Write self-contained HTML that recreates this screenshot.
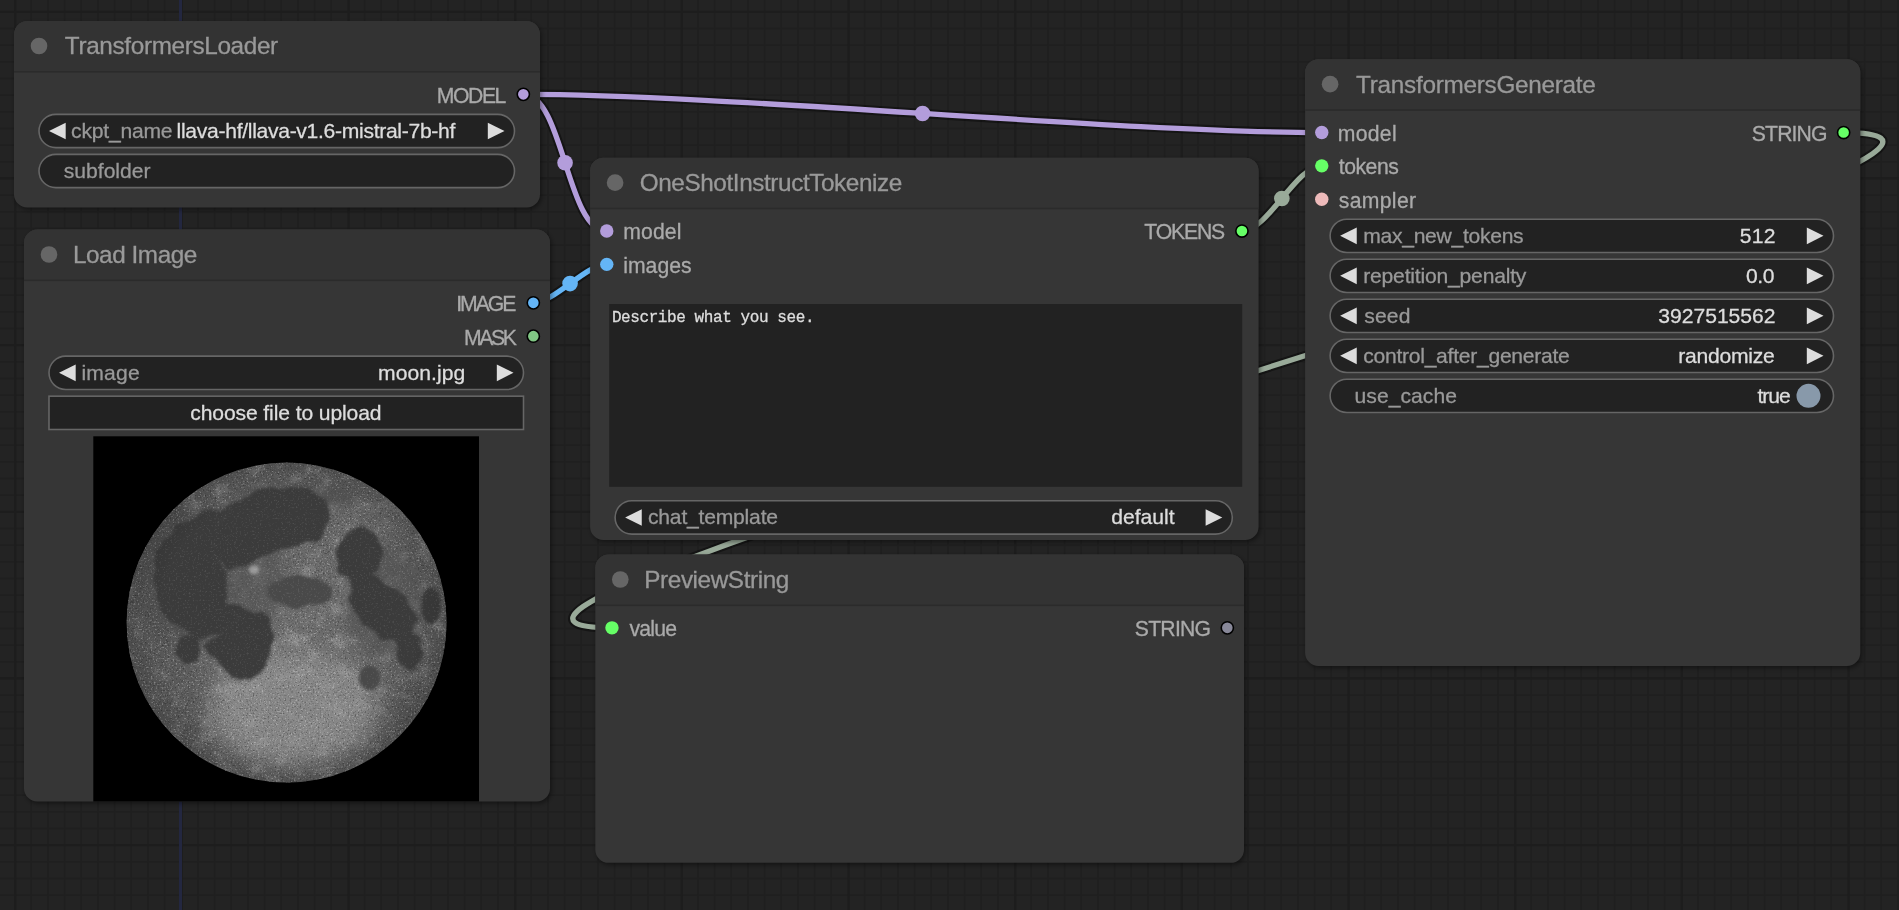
<!DOCTYPE html><html><head><meta charset="utf-8"><style>html,body{margin:0;padding:0;background:#222;overflow:hidden}svg{display:block;will-change:transform}text{font-family:"Liberation Sans", sans-serif}</style></head><body>
<svg width="1899" height="910" viewBox="0 0 1899 910">
<defs><filter id="sh" x="-10%" y="-10%" width="120%" height="120%"><feGaussianBlur stdDeviation="2.5"/></filter></defs>
<rect width="1899" height="910" fill="#232323"/>
<path d="M-2.07 0V910M31.27 0V910M47.93 0V910M64.60 0V910M81.27 0V910M97.93 0V910M114.60 0V910M131.27 0V910M147.93 0V910M164.60 0V910M197.93 0V910M214.60 0V910M231.27 0V910M247.93 0V910M264.60 0V910M281.27 0V910M297.93 0V910M314.60 0V910M331.27 0V910M364.60 0V910M381.27 0V910M397.93 0V910M414.60 0V910M431.27 0V910M447.93 0V910M464.60 0V910M481.27 0V910M497.93 0V910M531.27 0V910M547.93 0V910M564.60 0V910M581.27 0V910M597.93 0V910M614.60 0V910M631.27 0V910M647.93 0V910M664.60 0V910M697.93 0V910M714.60 0V910M731.27 0V910M747.93 0V910M764.60 0V910M781.27 0V910M797.93 0V910M814.60 0V910M831.27 0V910M864.60 0V910M881.27 0V910M897.93 0V910M914.60 0V910M931.27 0V910M947.93 0V910M964.60 0V910M981.27 0V910M997.93 0V910M1031.27 0V910M1047.93 0V910M1064.60 0V910M1081.27 0V910M1097.93 0V910M1114.60 0V910M1131.27 0V910M1147.93 0V910M1164.60 0V910M1197.93 0V910M1214.60 0V910M1231.27 0V910M1247.93 0V910M1264.60 0V910M1281.27 0V910M1297.93 0V910M1314.60 0V910M1331.27 0V910M1364.60 0V910M1381.27 0V910M1397.93 0V910M1414.60 0V910M1431.27 0V910M1447.93 0V910M1464.60 0V910M1481.27 0V910M1497.93 0V910M1531.27 0V910M1547.93 0V910M1564.60 0V910M1581.27 0V910M1597.93 0V910M1614.60 0V910M1631.27 0V910M1647.93 0V910M1664.60 0V910M1697.93 0V910M1714.60 0V910M1731.27 0V910M1747.93 0V910M1764.60 0V910M1781.27 0V910M1797.93 0V910M1814.60 0V910M1831.27 0V910M1864.60 0V910M1881.27 0V910M1897.93 0V910M1914.60 0V910M0 -4.87H1899M0 28.47H1899M0 45.13H1899M0 61.80H1899M0 78.47H1899M0 95.13H1899M0 111.80H1899M0 128.47H1899M0 145.13H1899M0 161.80H1899M0 195.13H1899M0 211.80H1899M0 228.47H1899M0 245.13H1899M0 261.80H1899M0 278.47H1899M0 295.13H1899M0 311.80H1899M0 328.47H1899M0 361.80H1899M0 378.47H1899M0 395.13H1899M0 411.80H1899M0 428.47H1899M0 445.13H1899M0 461.80H1899M0 478.47H1899M0 495.13H1899M0 528.47H1899M0 545.13H1899M0 561.80H1899M0 578.47H1899M0 595.13H1899M0 611.80H1899M0 628.47H1899M0 645.13H1899M0 661.80H1899M0 695.13H1899M0 711.80H1899M0 728.47H1899M0 745.13H1899M0 761.80H1899M0 778.47H1899M0 795.13H1899M0 811.80H1899M0 828.47H1899M0 861.80H1899M0 878.47H1899M0 895.13H1899M0 911.80H1899" stroke="#1f1f1f" stroke-width="1.4" fill="none"/>
<path d="M15.20 0V910M181.87 0V910M348.53 0V910M515.20 0V910M681.87 0V910M848.53 0V910M1015.20 0V910M1181.87 0V910M1348.53 0V910M1515.20 0V910M1681.87 0V910M1848.53 0V910M0 11.80H1899M0 178.47H1899M0 345.13H1899M0 511.80H1899M0 678.47H1899M0 845.13H1899" stroke="#1d1d1d" stroke-width="2.2" fill="none"/>
<rect x="179" y="0" width="3" height="910" fill="#232740"/>
<path d="M1843.63 132.53C2175.51 132.53 280.09 627.83 611.97 627.83" stroke="rgba(0,0,0,0.4)" stroke-width="9.5" fill="none"/>
<path d="M1843.63 132.53C2175.51 132.53 280.09 627.83 611.97 627.83" stroke="#9a9" stroke-width="5.3" fill="none"/>
<path d="M523.33 94.33C563.37 94.33 566.73 231.03 606.77 231.03" stroke="rgba(0,0,0,0.4)" stroke-width="9.5" fill="none"/>
<path d="M523.33 94.33C563.37 94.33 566.73 231.03 606.77 231.03" stroke="#b39ddb" stroke-width="5.3" fill="none"/>
<circle cx="565.05" cy="162.68" r="7.8" fill="#b39ddb"/>
<path d="M523.33 94.33C723.17 94.33 1121.93 132.53 1321.77 132.53" stroke="rgba(0,0,0,0.4)" stroke-width="9.5" fill="none"/>
<path d="M523.33 94.33C723.17 94.33 1121.93 132.53 1321.77 132.53" stroke="#b39ddb" stroke-width="5.3" fill="none"/>
<circle cx="922.55" cy="113.43" r="7.8" fill="#b39ddb"/>
<path d="M533.33 302.83C554.06 302.83 586.04 264.37 606.77 264.37" stroke="rgba(0,0,0,0.4)" stroke-width="9.5" fill="none"/>
<path d="M533.33 302.83C554.06 302.83 586.04 264.37 606.77 264.37" stroke="#64b5f6" stroke-width="5.3" fill="none"/>
<circle cx="570.05" cy="283.60" r="7.8" fill="#64b5f6"/>
<path d="M1241.93 231.03C1267.70 231.03 1296.00 165.87 1321.77 165.87" stroke="rgba(0,0,0,0.4)" stroke-width="9.5" fill="none"/>
<path d="M1241.93 231.03C1267.70 231.03 1296.00 165.87 1321.77 165.87" stroke="#9a9" stroke-width="5.3" fill="none"/>
<circle cx="1281.85" cy="198.45" r="7.8" fill="#9a9"/>
<rect x="15.50" y="23.00" width="526.00" height="186.50" rx="13.33" fill="rgba(0,0,0,0.45)" filter="url(#sh)"/>
<rect x="14.00" y="21.00" width="526.00" height="186.50" rx="13.33" fill="#363636"/>
<path d="M14.00 71.00V34.33A13.33 13.33 0 0 1 27.33 21.00H526.67A13.33 13.33 0 0 1 540.00 34.33V71.00Z" fill="#333"/>
<rect x="14.00" y="71.00" width="526.00" height="1.6" fill="#2b2b2b"/>
<circle cx="39.00" cy="46.00" r="8.33" fill="#666"/>
<text x="64.80" y="54.33" font-size="24.3" fill="#999" stroke="#999" stroke-width="0.3" style="font-family:'Liberation Sans', sans-serif;letter-spacing:-0.341px">TransformersLoader</text>
<circle cx="523.33" cy="94.33" r="6.1" fill="#b39ddb" stroke="#000" stroke-width="1.6"/>
<text x="436.80" y="102.67" font-size="21.2" fill="#aaa" stroke="#aaa" stroke-width="0.3" style="font-family:'Liberation Sans', sans-serif;letter-spacing:-1.45px">MODEL</text>
<rect x="39.00" y="114.33" width="475.50" height="33.33" rx="16.67" fill="#222" stroke="#666" stroke-width="1.6"/>
<path d="M65.67 122.67L49.00 131.00L65.67 139.33Z" fill="#ddd"/>
<path d="M487.83 122.67L504.50 131.00L487.83 139.33Z" fill="#ddd"/>
<text x="71.10" y="137.67" font-size="21.1" fill="#999" stroke="#999" stroke-width="0.3" style="font-family:'Liberation Sans', sans-serif;letter-spacing:-0.225px">ckpt_name</text>
<text x="176.60" y="137.67" font-size="21.1" fill="#ddd" stroke="#ddd" stroke-width="0.3" style="font-family:'Liberation Sans', sans-serif;letter-spacing:-0.3px">llava-hf/llava-v1.6-mistral-7b-hf</text>
<rect x="39.00" y="154.33" width="475.50" height="33.33" rx="16.67" fill="#222" stroke="#666" stroke-width="1.6"/>
<text x="63.85" y="177.67" font-size="21.1" fill="#999" stroke="#999" stroke-width="0.3" style="font-family:'Liberation Sans', sans-serif;letter-spacing:-0.019px">subfolder</text>
<rect x="25.50" y="231.50" width="526.00" height="572.00" rx="13.33" fill="rgba(0,0,0,0.45)" filter="url(#sh)"/>
<rect x="24.00" y="229.50" width="526.00" height="572.00" rx="13.33" fill="#363636"/>
<path d="M24.00 279.50V242.83A13.33 13.33 0 0 1 37.33 229.50H536.67A13.33 13.33 0 0 1 550.00 242.83V279.50Z" fill="#333"/>
<rect x="24.00" y="279.50" width="526.00" height="1.6" fill="#2b2b2b"/>
<circle cx="49.00" cy="254.50" r="8.33" fill="#666"/>
<text x="72.90" y="262.83" font-size="24.3" fill="#999" stroke="#999" stroke-width="0.3" style="font-family:'Liberation Sans', sans-serif;letter-spacing:-0.433px">Load Image</text>
<circle cx="533.33" cy="302.83" r="6.1" fill="#64b5f6" stroke="#000" stroke-width="1.6"/>
<text x="456.20" y="311.17" font-size="21.2" fill="#aaa" stroke="#aaa" stroke-width="0.3" style="font-family:'Liberation Sans', sans-serif;letter-spacing:-2.025px">IMAGE</text>
<circle cx="533.33" cy="336.17" r="6.1" fill="#81c784" stroke="#000" stroke-width="1.6"/>
<text x="464.00" y="344.50" font-size="21.2" fill="#aaa" stroke="#aaa" stroke-width="0.3" style="font-family:'Liberation Sans', sans-serif;letter-spacing:-2.4px">MASK</text>
<rect x="49.00" y="356.17" width="474.50" height="33.33" rx="16.67" fill="#222" stroke="#666" stroke-width="1.6"/>
<path d="M75.67 364.50L59.00 372.83L75.67 381.17Z" fill="#ddd"/>
<path d="M496.83 364.50L513.50 372.83L496.83 381.17Z" fill="#ddd"/>
<text x="81.40" y="379.50" font-size="21.1" fill="#999" stroke="#999" stroke-width="0.3" style="font-family:'Liberation Sans', sans-serif;letter-spacing:0.225px">image</text>
<text x="378.10" y="379.50" font-size="21.1" fill="#ddd" stroke="#ddd" stroke-width="0.3" style="font-family:'Liberation Sans', sans-serif;letter-spacing:0.057px">moon.jpg</text>
<rect x="49.00" y="396.17" width="474.50" height="33.33" fill="#222" stroke="#666" stroke-width="1.6"/>
<text x="190.20" y="419.50" font-size="21.1" fill="#ddd" stroke="#ddd" stroke-width="0.3" style="font-family:'Liberation Sans', sans-serif;letter-spacing:-0.105px">choose file to upload</text>
<rect x="93.3" y="436.3" width="385.7" height="365.2" fill="#000"/>
<defs><clipPath id="mc"><circle cx="286.60" cy="622.60" r="160.00"/></clipPath>
<radialGradient id="mg" cx="0.5" cy="0.5" r="0.5"><stop offset="0" stop-color="#6e6e6e"/><stop offset="0.7" stop-color="#666"/><stop offset="1" stop-color="#575757"/></radialGradient>
<filter id="mb" x="-30%" y="-30%" width="160%" height="160%"><feGaussianBlur stdDeviation="30"/></filter>
<filter id="mrough" x="-20%" y="-20%" width="140%" height="140%"><feTurbulence type="fractalNoise" baseFrequency="0.02" numOctaves="2" seed="5" result="t"/><feDisplacementMap in="SourceGraphic" in2="t" scale="30" xChannelSelector="R" yChannelSelector="G" result="d"/><feGaussianBlur in="d" stdDeviation="5"/></filter>
<filter id="mb2" x="-20%" y="-20%" width="140%" height="140%"><feGaussianBlur stdDeviation="5"/></filter>
<filter id="mb3" x="-30%" y="-30%" width="160%" height="160%"><feGaussianBlur stdDeviation="16"/></filter>
<filter id="noise" x="0" y="0" width="100%" height="100%"><feTurbulence type="fractalNoise" baseFrequency="0.55" numOctaves="2" seed="7"/><feColorMatrix values="0 0 0 0 1  0 0 0 0 1  0 0 0 0 1  0 0 0 4 -2.25"/></filter>
<filter id="noise2" x="0" y="0" width="100%" height="100%"><feTurbulence type="fractalNoise" baseFrequency="0.6" numOctaves="2" seed="11"/><feColorMatrix values="0 0 0 0 0  0 0 0 0 0  0 0 0 0 0  0 0 0 3.5 -1.9"/></filter>
<filter id="noise3" x="0" y="0" width="100%" height="100%"><feTurbulence type="fractalNoise" baseFrequency="0.06" numOctaves="3" seed="2"/><feColorMatrix values="0 0 0 0 1  0 0 0 0 1  0 0 0 0 1  0 0 0 2.5 -1.2"/></filter>
<radialGradient id="rim" cx="0.5" cy="0.5" r="0.5"><stop offset="0.8" stop-color="#000" stop-opacity="0"/><stop offset="1" stop-color="#000" stop-opacity="0.12"/></radialGradient></defs>
<circle cx="286.60" cy="622.60" r="160.00" fill="url(#mg)"/>
<g clip-path="url(#mc)">
<rect x="126.60" y="462.60" width="320.00" height="320.00" filter="url(#noise3)" opacity="0.22"/>
<g transform="translate(120,456) scale(0.36711)">
<ellipse cx="470" cy="690" rx="230" ry="160" fill="#a0a0a0" filter="url(#mb)" opacity="0.55"/>
<ellipse cx="140" cy="320" rx="110" ry="210" fill="#4a4a4a" filter="url(#mb)" opacity="0.6"/>
<ellipse cx="130" cy="660" rx="110" ry="150" fill="#505050" filter="url(#mb)" opacity="0.4"/>
<ellipse cx="820" cy="640" rx="90" ry="140" fill="#505050" filter="url(#mb)" opacity="0.35"/>
<ellipse cx="700" cy="150" rx="170" ry="110" fill="#666" filter="url(#mb)" opacity="0.4"/>
</g>
<rect x="126.60" y="462.60" width="320.00" height="320.00" filter="url(#noise)" opacity="0.24"/>
<rect x="126.60" y="462.60" width="320.00" height="320.00" filter="url(#noise2)" opacity="0.3"/>
<g transform="translate(120,456) scale(0.36711)">
<ellipse cx="480" cy="110" rx="170" ry="30" fill="#505050" filter="url(#mb3)" opacity="0.8"/>
<g fill="#505050" filter="url(#mb3)" opacity="0.6">
<ellipse cx="260" cy="330" rx="190" ry="190"/>
<ellipse cx="720" cy="400" rx="110" ry="150"/>
</g>
<g fill="#3b3b3b" filter="url(#mrough)">
<path d="M340 110L420 85L510 90L560 120L575 180L545 225L470 250L400 265L340 300L290 310L250 270L260 200L300 140Z"/>
<path d="M100 260L150 190L230 150L300 140L260 200L250 270L290 320L290 400L320 450L280 480L220 500L160 470L110 420L90 340Z"/>
<path d="M290 400L360 420L410 440L420 500L400 570L360 610L300 600L260 560L230 510L280 480L320 450Z"/>
<path d="M110 420L160 470L220 500L200 460L140 400Z"/>
<path d="M620 330L700 330L780 380L810 450L780 510L720 500L660 460L630 400Z"/>
<ellipse cx="188" cy="528" rx="38" ry="42"/>
<ellipse cx="652" cy="267" rx="64" ry="74"/>
<ellipse cx="790" cy="530" rx="38" ry="52"/>
</g>
<ellipse cx="847" cy="408" rx="27" ry="50" fill="#3b3b3b" filter="url(#mb2)"/>
<ellipse cx="680" cy="604" rx="29" ry="34" fill="#484848" filter="url(#mb2)"/>
<ellipse cx="490" cy="370" rx="90" ry="45" fill="#4a4a4a" filter="url(#mrough)"/>
<ellipse cx="365" cy="310" rx="14" ry="12" fill="#999" filter="url(#mb2)"/>
</g>
<rect x="126.60" y="462.60" width="320.00" height="320.00" filter="url(#noise)" opacity="0.1"/>
<circle cx="286.60" cy="622.60" r="160.00" fill="url(#rim)"/>
</g>
<rect x="591.60" y="159.70" width="668.50" height="382.30" rx="13.33" fill="rgba(0,0,0,0.45)" filter="url(#sh)"/>
<rect x="590.10" y="157.70" width="668.50" height="382.30" rx="13.33" fill="#363636"/>
<path d="M590.10 207.70V171.03A13.33 13.33 0 0 1 603.43 157.70H1245.27A13.33 13.33 0 0 1 1258.60 171.03V207.70Z" fill="#333"/>
<rect x="590.10" y="207.70" width="668.50" height="1.6" fill="#2b2b2b"/>
<circle cx="615.10" cy="182.70" r="8.33" fill="#666"/>
<text x="639.70" y="191.03" font-size="24.3" fill="#999" stroke="#999" stroke-width="0.3" style="font-family:'Liberation Sans', sans-serif;letter-spacing:-0.4px">OneShotInstructTokenize</text>
<circle cx="606.77" cy="231.03" r="6.7" fill="#b39ddb"/>
<text x="623.30" y="239.37" font-size="21.2" fill="#aaa" stroke="#aaa" stroke-width="0.3" style="font-family:'Liberation Sans', sans-serif;letter-spacing:0.1px">model</text>
<circle cx="606.77" cy="264.37" r="6.7" fill="#64b5f6"/>
<text x="623.30" y="272.70" font-size="21.2" fill="#aaa" stroke="#aaa" stroke-width="0.3" style="font-family:'Liberation Sans', sans-serif;letter-spacing:-0.02px">images</text>
<circle cx="1241.93" cy="231.03" r="6.1" fill="#6f6" stroke="#000" stroke-width="1.6"/>
<text x="1144.30" y="239.37" font-size="21.2" fill="#aaa" stroke="#aaa" stroke-width="0.3" style="font-family:'Liberation Sans', sans-serif;letter-spacing:-1.18px">TOKENS</text>
<rect x="609.2" y="304" width="633" height="182.8" fill="#222"/>
<text x="611.90" y="321.80" font-size="16.0" fill="#ddd" stroke="#ddd" stroke-width="0.3" style="font-family:'Liberation Mono', monospace;letter-spacing:-0.41px">Describe what you see.</text>
<rect x="615.10" y="500.80" width="617.20" height="33.33" rx="16.67" fill="#222" stroke="#666" stroke-width="1.6"/>
<path d="M641.77 509.13L625.10 517.47L641.77 525.80Z" fill="#ddd"/>
<path d="M1205.63 509.13L1222.30 517.47L1205.63 525.80Z" fill="#ddd"/>
<text x="648.00" y="524.13" font-size="21.1" fill="#999" stroke="#999" stroke-width="0.3" style="font-family:'Liberation Sans', sans-serif;letter-spacing:-0.208px">chat_template</text>
<text x="1111.20" y="524.13" font-size="21.1" fill="#ddd" stroke="#ddd" stroke-width="0.3" style="font-family:'Liberation Sans', sans-serif;letter-spacing:0.017px">default</text>
<rect x="1306.60" y="61.20" width="555.20" height="606.80" rx="13.33" fill="rgba(0,0,0,0.45)" filter="url(#sh)"/>
<rect x="1305.10" y="59.20" width="555.20" height="606.80" rx="13.33" fill="#363636"/>
<path d="M1305.10 109.20V72.53A13.33 13.33 0 0 1 1318.43 59.20H1846.97A13.33 13.33 0 0 1 1860.30 72.53V109.20Z" fill="#333"/>
<rect x="1305.10" y="109.20" width="555.20" height="1.6" fill="#2b2b2b"/>
<circle cx="1330.10" cy="84.20" r="8.33" fill="#666"/>
<text x="1356.00" y="92.53" font-size="24.3" fill="#999" stroke="#999" stroke-width="0.3" style="font-family:'Liberation Sans', sans-serif;letter-spacing:-0.263px">TransformersGenerate</text>
<circle cx="1321.77" cy="132.53" r="6.7" fill="#b39ddb"/>
<text x="1337.80" y="140.87" font-size="21.2" fill="#aaa" stroke="#aaa" stroke-width="0.3" style="font-family:'Liberation Sans', sans-serif;letter-spacing:0.275px">model</text>
<circle cx="1321.77" cy="165.87" r="6.7" fill="#6f6"/>
<text x="1338.80" y="174.20" font-size="21.2" fill="#aaa" stroke="#aaa" stroke-width="0.3" style="font-family:'Liberation Sans', sans-serif;letter-spacing:-0.48px">tokens</text>
<circle cx="1321.77" cy="199.20" r="6.7" fill="#ebb"/>
<text x="1338.80" y="207.53" font-size="21.2" fill="#aaa" stroke="#aaa" stroke-width="0.3" style="font-family:'Liberation Sans', sans-serif;letter-spacing:0.317px">sampler</text>
<circle cx="1843.63" cy="132.53" r="6.1" fill="#6f6" stroke="#000" stroke-width="1.6"/>
<text x="1751.80" y="140.87" font-size="21.2" fill="#aaa" stroke="#aaa" stroke-width="0.3" style="font-family:'Liberation Sans', sans-serif;letter-spacing:-0.86px">STRING</text>
<rect x="1330.10" y="219.20" width="503.40" height="33.33" rx="16.67" fill="#222" stroke="#666" stroke-width="1.6"/>
<path d="M1356.77 227.53L1340.10 235.87L1356.77 244.20Z" fill="#ddd"/>
<path d="M1806.83 227.53L1823.50 235.87L1806.83 244.20Z" fill="#ddd"/>
<text x="1363.20" y="242.53" font-size="21.1" fill="#999" stroke="#999" stroke-width="0.3" style="font-family:'Liberation Sans', sans-serif;letter-spacing:-0.285px">max_new_tokens</text>
<text x="1739.80" y="242.53" font-size="21.1" fill="#ddd" stroke="#ddd" stroke-width="0.3" style="font-family:'Liberation Sans', sans-serif;letter-spacing:0.2px">512</text>
<rect x="1330.10" y="259.20" width="503.40" height="33.33" rx="16.67" fill="#222" stroke="#666" stroke-width="1.6"/>
<path d="M1356.77 267.53L1340.10 275.87L1356.77 284.20Z" fill="#ddd"/>
<path d="M1806.83 267.53L1823.50 275.87L1806.83 284.20Z" fill="#ddd"/>
<text x="1363.20" y="282.53" font-size="21.1" fill="#999" stroke="#999" stroke-width="0.3" style="font-family:'Liberation Sans', sans-serif;letter-spacing:-0.194px">repetition_penalty</text>
<text x="1746.00" y="282.53" font-size="21.1" fill="#ddd" stroke="#ddd" stroke-width="0.3" style="font-family:'Liberation Sans', sans-serif;letter-spacing:-0.4px">0.0</text>
<rect x="1330.10" y="299.20" width="503.40" height="33.33" rx="16.67" fill="#222" stroke="#666" stroke-width="1.6"/>
<path d="M1356.77 307.53L1340.10 315.87L1356.77 324.20Z" fill="#ddd"/>
<path d="M1806.83 307.53L1823.50 315.87L1806.83 324.20Z" fill="#ddd"/>
<text x="1364.20" y="322.53" font-size="21.1" fill="#999" stroke="#999" stroke-width="0.3" style="font-family:'Liberation Sans', sans-serif;letter-spacing:0.167px">seed</text>
<text x="1658.30" y="322.53" font-size="21.1" fill="#ddd" stroke="#ddd" stroke-width="0.3" style="font-family:'Liberation Sans', sans-serif;letter-spacing:-0.011px">3927515562</text>
<rect x="1330.10" y="339.20" width="503.40" height="33.33" rx="16.67" fill="#222" stroke="#666" stroke-width="1.6"/>
<path d="M1356.77 347.53L1340.10 355.87L1356.77 364.20Z" fill="#ddd"/>
<path d="M1806.83 347.53L1823.50 355.87L1806.83 364.20Z" fill="#ddd"/>
<text x="1363.20" y="362.53" font-size="21.1" fill="#999" stroke="#999" stroke-width="0.3" style="font-family:'Liberation Sans', sans-serif;letter-spacing:-0.267px">control_after_generate</text>
<text x="1678.20" y="362.53" font-size="21.1" fill="#ddd" stroke="#ddd" stroke-width="0.3" style="font-family:'Liberation Sans', sans-serif;letter-spacing:-0.25px">randomize</text>
<rect x="1330.10" y="379.20" width="503.40" height="33.33" rx="16.67" fill="#222" stroke="#666" stroke-width="1.6"/>
<text x="1354.50" y="402.53" font-size="21.1" fill="#999" stroke="#999" stroke-width="0.3" style="font-family:'Liberation Sans', sans-serif;letter-spacing:0.05px">use_cache</text>
<circle cx="1808.50" cy="395.87" r="12.00" fill="#89a"/>
<text x="1757.40" y="402.53" font-size="21.1" fill="#ddd" stroke="#ddd" stroke-width="0.3" style="font-family:'Liberation Sans', sans-serif;letter-spacing:-1.0px">true</text>
<rect x="596.80" y="556.50" width="648.70" height="308.30" rx="13.33" fill="rgba(0,0,0,0.45)" filter="url(#sh)"/>
<rect x="595.30" y="554.50" width="648.70" height="308.30" rx="13.33" fill="#363636"/>
<path d="M595.30 604.50V567.83A13.33 13.33 0 0 1 608.63 554.50H1230.67A13.33 13.33 0 0 1 1244.00 567.83V604.50Z" fill="#333"/>
<rect x="595.30" y="604.50" width="648.70" height="1.6" fill="#2b2b2b"/>
<circle cx="620.30" cy="579.50" r="8.33" fill="#666"/>
<text x="644.30" y="587.83" font-size="24.3" fill="#999" stroke="#999" stroke-width="0.3" style="font-family:'Liberation Sans', sans-serif;letter-spacing:-0.408px">PreviewString</text>
<circle cx="611.97" cy="627.83" r="6.7" fill="#6f6"/>
<text x="629.50" y="636.17" font-size="21.2" fill="#aaa" stroke="#aaa" stroke-width="0.3" style="font-family:'Liberation Sans', sans-serif;letter-spacing:-0.775px">value</text>
<circle cx="1227.33" cy="627.83" r="6.1" fill="#889" stroke="#000" stroke-width="1.6"/>
<text x="1134.80" y="636.17" font-size="21.2" fill="#aaa" stroke="#aaa" stroke-width="0.3" style="font-family:'Liberation Sans', sans-serif;letter-spacing:-0.76px">STRING</text>
</svg></body></html>
